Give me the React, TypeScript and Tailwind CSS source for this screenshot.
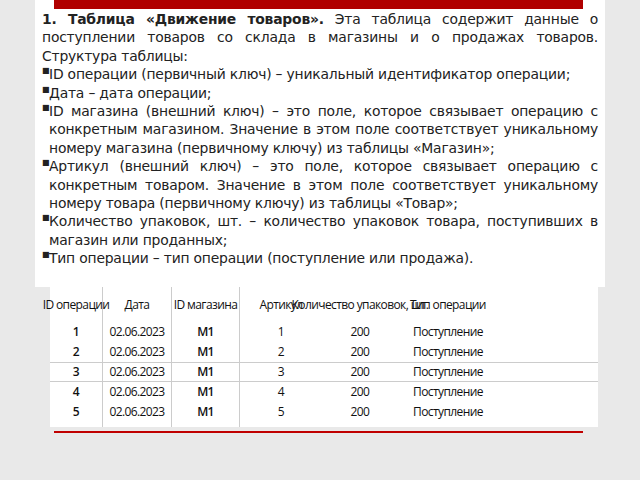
const rows = [1, 2, 3, 4, 5];

function Bullet({ children }: { children: React.ReactNode }) {
  return (
    <p className="relative pl-[7px] [text-align:justify] [text-align-last:left]">
      <span className="absolute left-0 top-[-3px] text-[8px]">■</span>
      {children}
    </p>
  );
}

export default function App() {
  const cell = "flex items-center justify-center whitespace-nowrap";
  return (
    <div className="w-[640px] h-[480px] bg-[#e9e9e9] overflow-hidden flex flex-col" style={{ fontFamily: '"DejaVu Sans", sans-serif' }}>
      <div className="ml-[35px] w-[570px] h-[287px] bg-white flex flex-col">
        <div className="ml-[19px] w-[529px] h-[9px] bg-[#b00000]" />
        <div className="ml-[7px] w-[556px] mt-[1px] text-[13.9px] leading-[18.4px] text-[#222] tracking-[-0.2px]">
          <p className="[text-align:justify]">
            <b>1. Таблица «Движение товаров».</b> Эта таблица содержит данные о поступлении товаров со склада в магазины и о продажах товаров. Структура таблицы:
          </p>
          <Bullet>ID операции (первичный ключ) – уникальный идентификатор операции;</Bullet>
          <Bullet>Дата – дата операции;</Bullet>
          <Bullet>ID магазина (внешний ключ) – это поле, которое связывает операцию с конкретным магазином. Значение в этом поле соответствует уникальному номеру магазина (первичному ключу) из таблицы «Магазин»;</Bullet>
          <Bullet>Артикул (внешний ключ) – это поле, которое связывает операцию с конкретным товаром. Значение в этом поле соответствует уникальному номеру товара (первичному ключу) из таблицы «Товар»;</Bullet>
          <Bullet>Количество упаковок, шт. – количество упаковок товара, поступивших в магазин или проданных;</Bullet>
          <Bullet>Тип операции – тип операции (поступление или продажа).</Bullet>
        </div>
      </div>
      <div className="ml-[50px] w-[548px] h-[140px] bg-white text-[12px] text-[#111] tracking-[-0.6px]" style={{ fontFamily: '"Open Sans", sans-serif' }}>
        <div className="grid grid-cols-[53px_69px_68px_82px_76px_100px_1fr] h-full">
          {[0, 1, 2, 3, 4, 5, 6].map((c) => (
            <div key={c} className={c < 3 ? "border-r border-[#ccc] flex flex-col" : "flex flex-col"}>
              <div className={`${cell} h-[35px] text-center leading-[20px] ${c === 4 ? "whitespace-normal" : ""}`}>
                {["ID операции", "Дата", "ID магазина", "Артикул", "Количество упаковок, шт.", "Тип операции", ""][c]}
              </div>
              {rows.map((r) => (
                <div key={r} className={`${cell} h-[20px] ${r === 3 ? "border-t border-b border-[#ccc]" : ""} ${c === 2 || c === 0 ? "font-semibold" : ""}`}>
                  {[String(r), "02.06.2023", "M1", String(r), "200", "Поступление", ""][c]}
                </div>
              ))}
            </div>
          ))}
        </div>
      </div>
      <div className="ml-[54px] mt-[4px] w-[529px] h-[2px] bg-[#c00000]" />
    </div>
  );
}
